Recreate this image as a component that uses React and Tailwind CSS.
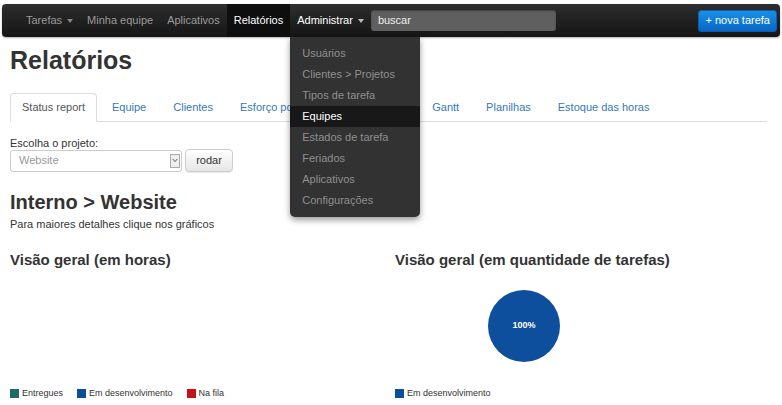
import React from 'react';

const NAV = [
  { label: 'Tarefas', caret: true },
  { label: 'Minha equipe' },
  { label: 'Aplicativos' },
  { label: 'Relatórios', active: true },
  { label: 'Administrar', caret: true, open: true },
];

const MENU = [
  'Usuários',
  'Clientes > Projetos',
  'Tipos de tarefa',
  'Equipes',
  'Estados de tarefa',
  'Feriados',
  'Aplicativos',
  'Configurações',
];

const TABS = ['Status report', 'Equipe', 'Clientes', 'Esforço por projeto', 'Alocação', 'Gantt', 'Planilhas', 'Estoque das horas'];

function Caret({ light }) {
  return (
    <span
      className={`ml-[5px] inline-block w-0 h-0 border-x-[3.5px] border-t-[4px] border-x-transparent ${
        light ? 'border-t-[#bbb]' : 'border-t-[#888]'
      }`}
    />
  );
}

function Navbar() {
  return (
    <div className="relative mx-[2px] mt-[4px] h-[33px] rounded-[4px] bg-gradient-to-b from-[#2e2e2e] to-[#151515] flex items-center pl-[17px] pr-[3px] shadow-[0_1px_2px_rgba(0,0,0,0.3)]">
      {NAV.map((n) => (
        <div
          key={n.label}
          className={`relative h-full flex items-center px-[7px] text-[11px] ${
            n.active ? 'bg-[#0e0e0e] text-white' : n.open ? 'text-white' : 'text-[#9a9a9a]'
          }`}
        >
          {n.label}
          {n.caret && <Caret light={n.open} />}
          {n.open && <Dropdown />}
        </div>
      ))}
      <div className="h-[21px] w-[185px] rounded-[3px] bg-[#5f5f5f] shadow-[inset_0_1px_2px_rgba(0,0,0,0.35)] flex items-center pl-[7px] text-[11px] text-[#eee]">
        buscar
      </div>
      <div className="flex-1" />
      <button className="h-[22px] px-[6px] rounded-[3px] bg-gradient-to-b from-[#1991e4] to-[#0966c6] text-white text-[11px] border border-[#0a5db0]">
        + nova tarefa
      </button>
    </div>
  );
}

function Dropdown() {
  return (
    <div className="absolute left-0 top-[33px] z-10 w-[130px] rounded-b-[5px] bg-[#323232] pt-[6px] pb-[6px] shadow-[0_3px_6px_rgba(0,0,0,0.4)]">
      {MENU.map((m) => (
        <div
          key={m}
          className={`h-[21px] flex items-center pl-[12px] text-[11px] ${
            m === 'Equipes' ? 'bg-[#181818] text-white' : 'text-[#8f8f8f]'
          }`}
        >
          {m}
        </div>
      ))}
    </div>
  );
}

function Legend({ items }) {
  return (
    <div className="flex items-center gap-[14px] text-[9px] text-[#333]">
      {items.map(([c, l]) => (
        <div key={l} className="flex items-center gap-[3px]">
          <span className="w-[9px] h-[9px]" style={{ background: c }} />
          {l}
        </div>
      ))}
    </div>
  );
}

export default function App() {
  return (
    <div className="w-[782px] h-[405px] overflow-hidden bg-white font-['Liberation_Sans',Arial,sans-serif] text-[#333]">
      <Navbar />
      <div className="px-[10px]">
        <h1 className="mt-[8px] text-[25px] leading-[30px] font-bold text-[#333]">Relatórios</h1>

        {/* tabs */}
        <div className="mt-[18px] flex border-b border-[#ddd] mr-[5px]">
          {TABS.map((t, i) => (
            <div
              key={t}
              className={`h-[29px] -mb-px flex items-center px-[11px] mr-[3px] text-[11px] rounded-t-[4px] ${
                i === 0 ? 'border border-[#ddd] border-b-white bg-white text-[#555]' : 'border border-transparent text-[#3479b8]'
              }`}
            >
              {t}
            </div>
          ))}
        </div>

        {/* project picker */}
        <div className="mt-[15px] text-[11px] leading-[12px] text-[#333]">Escolha o projeto:</div>
        <div className="flex items-center gap-[3px]">
          <div className="w-[172px] h-[22px] rounded-[3px] border border-[#ccc] flex items-center pl-[8px] pr-[1px] text-[11px] text-[#999]">
            <span className="flex-1">Website</span>
            <span className="w-[10px] h-[14px] border border-[#aaa] bg-[#eee] flex items-center justify-center">
              <svg viewBox="0 0 8 6" className="w-[6px] h-[5px]">
                <path d="M1 1 L4 4.5 L7 1" fill="none" stroke="#555" strokeWidth="1.3" />
              </svg>
            </span>
          </div>
          <button className="w-[48px] h-[23px] rounded-[4px] border border-[#ccc] bg-gradient-to-b from-white to-[#e6e6e6] text-[11px] text-[#333] shadow-[0_1px_1px_rgba(0,0,0,0.08)]">
            rodar
          </button>
        </div>

        <h2 className="mt-[18px] text-[20px] leading-[24px] font-bold text-[#333]">Interno &gt; Website</h2>
        <p className="mt-[3px] text-[11px] leading-[14px] text-[#333]">Para maiores detalhes clique nos gráficos</p>

        <div className="mt-[20px] grid grid-cols-[385px_1fr]">
          <div className="flex flex-col">
            <h3 className="text-[15px] leading-[18px] font-bold text-[#333]">Visão geral (em horas)</h3>
            <div className="h-[118px]" />
            <Legend
              items={[
                ['#1d6b66', 'Entregues'],
                ['#0b4f9c', 'Em desenvolvimento'],
                ['#c8101a', 'Na fila'],
              ]}
            />
          </div>
          <div className="flex flex-col">
            <h3 className="text-[15px] leading-[18px] font-bold text-[#333]">Visão geral (em quantidade de tarefas)</h3>
            <div className="h-[118px] pt-[21px]">
              <div className="ml-[93px] w-[72px] h-[72px] rounded-full bg-[#0d4f9c] flex items-center justify-center text-white text-[9px] font-bold">
                100%
              </div>
            </div>
            <Legend items={[['#0b4f9c', 'Em desenvolvimento']]} />
          </div>
        </div>
      </div>
    </div>
  );
}
